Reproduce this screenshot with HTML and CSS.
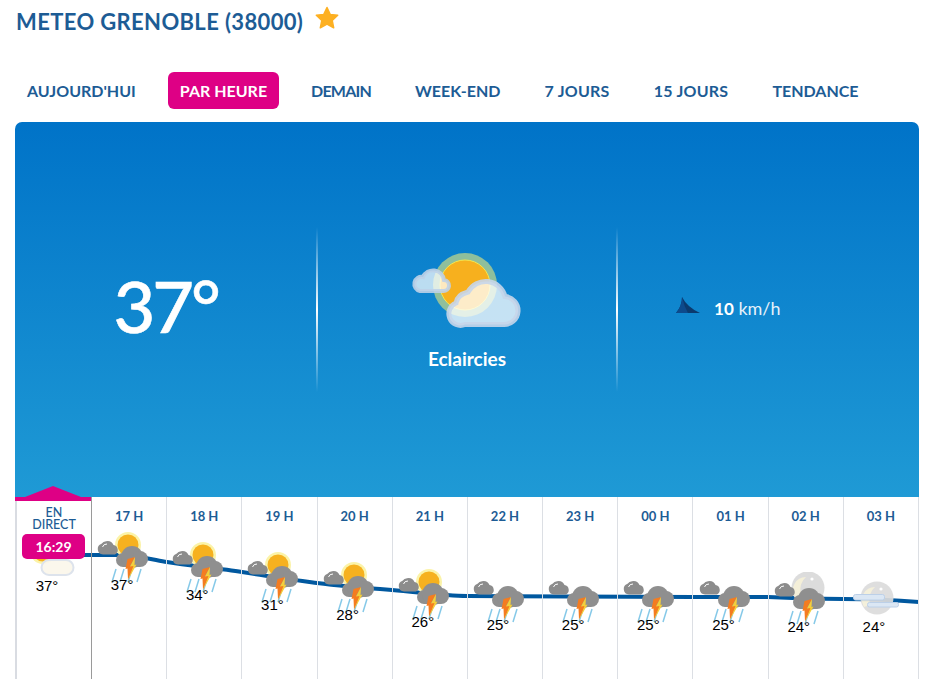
FILE: index.html
```html
<!DOCTYPE html>
<html lang="fr">
<head>
<meta charset="utf-8">
<title>Météo Grenoble</title>
<link rel="stylesheet" href="styles.css">
</head>
<body>
<svg class="defs" width="0" height="0" aria-hidden="true">
  <defs>
    <g id="small-cloud">
      <path d="M7 24.500a5.500 5.500 0 0 1-1.500-10.700a7 7 0 0 1 4.500-2.500a6.800 6.800 0 0 1 7.500 3.800a5 5 0 0 1 1.500 9.400z" fill="#8c8c8c"/>
      <path d="M6.500 17a4.500 4.500 0 0 1 4.500-3" fill="none" stroke="#fff" stroke-width="1"/>
    </g>
    <g id="storm-cloud">
      <g fill="#8f8f8f">
        <circle cx="27" cy="30" r="7"/>
        <circle cx="36" cy="27" r="11"/>
        <circle cx="44" cy="29" r="8"/>
        <rect x="27" y="28" width="17" height="9"/>
      </g>
      <path d="M39 27l-5 9l4.500-.5l-6.500 14l-.5-11l-2 .5l2-10z" fill="#f47c20"/>
      <path d="M39 27l-.5 8l2-.5l-8.500 15.500l5.500-14l-3.500.5z" fill="#f5cf3a"/>
    </g>
    <g id="rain" stroke="#86c9e8" stroke-width="1.500" fill="none">
      <path d="M20 39l-4 13M28 39l-4 13M36 39l-4 13M45 39l-4 13"/>
    </g>
    <g id="sun">
      <circle cx="32" cy="15" r="13" fill="#fbf3a8"/>
      <circle cx="32" cy="15" r="10.500" fill="#f6b11f"/>
    </g>
    <g id="moon">
      <circle cx="35" cy="16" r="16.500" fill="#dcdcdc"/>
      <path d="M33 5a13 13 0 0 0-11 20a13 13 0 0 0 6-3a16 16 0 0 1 5-17z" fill="#f4efd8"/>
      <circle cx="39" cy="7" r="1.600" fill="#fff"/>
    </g>
    <symbol id="storm-sun" viewBox="0 0 66 54">
      <use href="#sun"/>
      <use href="#small-cloud"/>
      <use href="#rain"/>
      <use href="#storm-cloud"/>
    </symbol>
    <symbol id="storm" viewBox="0 0 66 54">
      <use href="#small-cloud"/>
      <use href="#rain"/>
      <use href="#storm-cloud"/>
    </symbol>
    <symbol id="storm-moon" viewBox="0 0 66 54">
      <use href="#moon"/>
      <use href="#small-cloud"/>
      <use href="#rain"/>
      <use href="#storm-cloud"/>
    </symbol>
    <symbol id="fog-moon" viewBox="0 0 66 54">
      <use href="#moon" transform="translate(-6 10)" opacity=".92"/>
      <rect x="5.500" y="22.500" width="31" height="5.500" rx="2" fill="#dbe7f4" stroke="#bcd0e8"/>
      <rect x="19.500" y="30.500" width="31" height="4.500" rx="2" fill="#dbe7f4" stroke="#bcd0e8"/>
    </symbol>
    <symbol id="clear-now" viewBox="0 0 66 54">
      <circle cx="22" cy="20" r="13" fill="#fbf3a8"/>
      <circle cx="22" cy="20" r="10.500" fill="#f6b11f"/>
      <path d="M28 44a7.500 7.500 0 0 1 0-15h17a7.500 7.500 0 0 1 0 15z" fill="#fbf6ea" fill-opacity=".9" stroke="#dde3ec" stroke-width="2"/>
    </symbol>
  </defs>
</svg>
<main class="page">
  <header class="head">
    <h1 class="title">METEO GRENOBLE (38000)</h1>
    <svg class="star" viewBox="0 0 24 24" aria-hidden="true"><path d="M12 1.500l3.200 6.900 7.500.9-5.500 5.100 1.500 7.400-6.700-3.700-6.700 3.700 1.500-7.400-5.500-5.100 7.500-.9z" fill="#fdb022" stroke="#fdb022" stroke-linejoin="round" stroke-width="1.500"/></svg>
  </header>
  <nav class="tabs">
    <a class="tab">AUJOURD'HUI</a>
    <a class="tab tab-on">PAR HEURE</a>
    <a class="tab tab-tight">DEMAIN</a>
    <a class="tab">WEEK-END</a>
    <a class="tab tab-wide">7 JOURS</a>
    <a class="tab tab-wide">15 JOURS</a>
    <a class="tab">TENDANCE</a>
  </nav>
  <section class="hero">
    <div class="hero-cell"><span class="big-temp">37°</span></div>
    <div class="hero-cell hero-mid">
      <svg class="hero-icon" viewBox="0 0 112 80" aria-hidden="true">
        <circle cx="54" cy="32" r="32" fill="#8fbf9c"/>
        <circle cx="54" cy="32" r="25" fill="#f7b01e" stroke="#f8e64a" stroke-width="1"/>
        <path d="M54 71.500H92A14 14 0 0 0 94 43.500A20 20 0 0 0 57 39Q46 42 45 50A11 11 0 0 0 54 71.500Z" fill="rgba(255,255,255,.76)" stroke="rgba(198,214,234,.9)" stroke-width="5"/>
        <path d="M9 38H32A5.500 5.500 0 0 0 33 27A11 11 0 0 0 12 24A7 7 0 0 0 9 38Z" fill="rgba(255,255,255,.72)" stroke="rgba(190,210,232,.9)" stroke-width="4"/>
      </svg>
      <span class="hero-label">Eclaircies</span>
    </div>
    <div class="hero-cell">
      <div class="wind">
        <svg class="wind-icon" viewBox="0 0 24 16" aria-hidden="true">
          <path d="M6 0Q11 10 24 16H0Q6 9 6 0z" fill="#0b3a6e"/>
          <path d="M6 0Q6 9 0 16H12Q8 9 6 0z" fill="#0d4a8c"/>
        </svg>
        <span class="wind-text"><b>10</b> km/h</span>
      </div>
    </div>
  </section>
  <section class="chart">
    <div class="roof"></div>
    <svg class="curve" viewBox="0 0 904 182" aria-hidden="true">
      <path d="M32 58L100 58C120 58 135 62 152 65C175 69 205 71 227 75C250 79 280 83 302 86C325 89 350 91 377 93C410 96 430 99 452 99L678 100L753 100C790 102 810 102 828 102C860 102 880 103 904 105" fill="none" stroke="#00589f" stroke-width="4"/>
    </svg>
    <div class="col col-now">
      <div class="hour hour-now">EN<br>DIRECT</div>
      <div class="clock">16:29</div>
      <svg class="wx wx-now" aria-hidden="true"><use href="#clear-now"/></svg>
      <div class="temp">37°</div>
    </div>
    <div class="col">
      <div class="hour">17 H</div>
      <div class="fc"><svg class="wx" aria-hidden="true"><use href="#storm-sun"/></svg><div class="temp">37°</div></div>
    </div>
    <div class="col">
      <div class="hour">18 H</div>
      <div class="fc" style="margin-top:10px"><svg class="wx" aria-hidden="true"><use href="#storm-sun"/></svg><div class="temp">34°</div></div>
    </div>
    <div class="col">
      <div class="hour">19 H</div>
      <div class="fc" style="margin-top:20px"><svg class="wx" aria-hidden="true"><use href="#storm-sun"/></svg><div class="temp">31°</div></div>
    </div>
    <div class="col">
      <div class="hour">20 H</div>
      <div class="fc" style="margin-top:30px"><svg class="wx" aria-hidden="true"><use href="#storm-sun"/></svg><div class="temp">28°</div></div>
    </div>
    <div class="col">
      <div class="hour">21 H</div>
      <div class="fc" style="margin-top:37px"><svg class="wx" aria-hidden="true"><use href="#storm-sun"/></svg><div class="temp">26°</div></div>
    </div>
    <div class="col">
      <div class="hour">22 H</div>
      <div class="fc" style="margin-top:40px"><svg class="wx" aria-hidden="true"><use href="#storm"/></svg><div class="temp">25°</div></div>
    </div>
    <div class="col">
      <div class="hour">23 H</div>
      <div class="fc" style="margin-top:40px"><svg class="wx" aria-hidden="true"><use href="#storm"/></svg><div class="temp">25°</div></div>
    </div>
    <div class="col">
      <div class="hour">00 H</div>
      <div class="fc" style="margin-top:40px"><svg class="wx" aria-hidden="true"><use href="#storm"/></svg><div class="temp">25°</div></div>
    </div>
    <div class="col">
      <div class="hour">01 H</div>
      <div class="fc" style="margin-top:40px"><svg class="wx" aria-hidden="true"><use href="#storm"/></svg><div class="temp">25°</div></div>
    </div>
    <div class="col">
      <div class="hour">02 H</div>
      <div class="fc" style="margin-top:42px"><svg class="wx" aria-hidden="true"><use href="#storm-moon"/></svg><div class="temp">24°</div></div>
    </div>
    <div class="col">
      <div class="hour">03 H</div>
      <div class="fc" style="margin-top:42px"><svg class="wx" aria-hidden="true"><use href="#fog-moon"/></svg><div class="temp">24°</div></div>
    </div>
  </section>
</main>
</body>
</html>
```
FILE: styles.css
```css
html, body { margin: 0; padding: 0; background: #fff; }
body { font-family: "Lato", "Open Sans", sans-serif; color: #1d5c95; }
.defs { position: absolute; }
.page { width: 930px; height: 679px; overflow: hidden; padding: 0 11px 0 15px; box-sizing: border-box; display: flex; flex-direction: column; }
.head { display: flex; align-items: flex-start; gap: 10px; height: 72px; flex: none; }
.title { margin: 10px 0 0 1px; font-size: 22px; line-height: 24px; font-weight: 700; color: #1d5c95; letter-spacing: .36px; }
.star { width: 24px; height: 24px; margin: 6px 0 0 2px; }
.tabs { display: flex; gap: 20px; flex: none; height: 37px; margin-bottom: 13px; }
.tab { display: flex; align-items: center; padding: 0 12px; font-size: 16px; font-weight: 700; color: #1d5c95; border-radius: 6px; }
.tab-on { background: #de0085; color: #fff; }
.tab-tight { letter-spacing: -.8px; }
.tab-wide { letter-spacing: .25px; }
.hero { flex: none; height: 375px; display: grid; grid-template-columns: repeat(3, 1fr); align-items: center; background: linear-gradient(180deg, #0073c8 0%, #1f9ad5 100%); border-radius: 7px 7px 0 0; color: #fff; position: relative; }
.hero-cell { display: flex; flex-direction: column; align-items: center; justify-content: center; height: 165px; position: relative; }
.hero-mid::before, .hero-mid::after { content: ""; position: absolute; top: 0; bottom: 0; width: 1.500px; background: linear-gradient(180deg, rgba(255,255,255,0), #fff 50%, rgba(255,255,255,0)); }
.hero-mid::before { left: 0; }
.hero-mid::after { right: 0; }
.big-temp { font-size: 72px; line-height: 80px; font-weight: 500; letter-spacing: -3px; margin-bottom: 10px; -webkit-text-stroke: .6px #fff; }
.hero-icon { width: 112px; height: 80px; margin: 3px 0 0 1px; }
.hero-label { font-size: 19px; line-height: 22px; font-weight: 700; margin-top: 15px; }
.wind { display: flex; align-items: center; gap: 14px; margin-right: 80px; }
.wind-icon { width: 24px; height: 16px; margin-top: -10px; }
.wind-text { font-size: 18px; color: #e6f1fa; margin-top: -4px; }
.wind-text b { color: #fff; font-size: 17px; }
.chart { flex: none; height: 182px; display: grid; grid-template-columns: 77px repeat(11, 1fr); position: relative; }
.roof { position: absolute; left: 0; top: -11px; width: 76px; height: 15px; background: #de0085; clip-path: polygon(0 100%, 0 11px, 10px 11px, 38px 0, 66px 11px, 76px 11px, 100% 100%); z-index: 2; }
.curve { position: absolute; left: 0; top: 0; width: 904px; height: 182px; }
.col { border-right: 1px solid #dcdfe4; display: flex; flex-direction: column; align-items: center; min-width: 0; position: relative; }
.col-now { border-left: 2px solid #d9dce2; border-right-color: #9a9a9a; }
.hour { height: 33px; flex: none; padding-top: 11px; box-sizing: border-box; font-size: 13px; line-height: 16px; font-weight: 700; color: #1d5c95; }
.hour-now { padding-top: 10px; height: 37px; font-size: 12.500px; line-height: 12px; font-weight: 500; text-align: center; }
.fc { display: flex; flex-direction: column; align-items: center; margin-top: 0; }
.wx { width: 66px; height: 54px; }
.temp { font-family: "Liberation Sans", Arial, sans-serif; font-size: 15px; line-height: 16px; color: #000; margin-top: -7px; padding-right: 14px; position: relative; }
.clock { position: absolute; left: 5px; top: 37px; width: 63px; height: 25px; display: flex; align-items: center; justify-content: center; background: #de0085; border-radius: 5px; color: #fff; font-size: 14px; font-weight: 700; }
.wx-now { margin-top: -3px; }
```
